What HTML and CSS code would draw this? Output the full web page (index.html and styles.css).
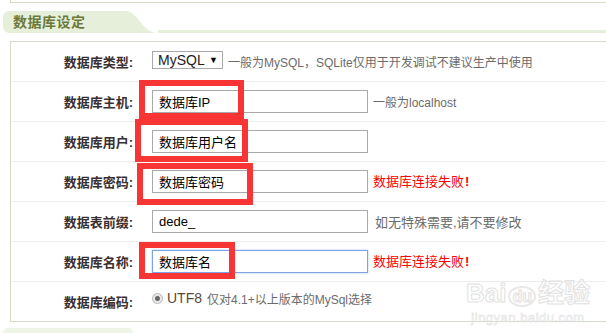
FILE: index.html
```html
<!DOCTYPE html>
<html lang="zh-CN">
<head>
    <meta charset="UTF-8">
    <title>数据库设定</title>
    <link rel="stylesheet" href="styles.css">
</head>
<body>
    <div class="prev-box"></div>

    <div class="section-head">
        <div class="tab">数据库设定</div>
        <div class="tab-line"></div>
    </div>

    <div class="box">
        <div class="row">
            <div class="label">数据库类型:</div>
            <div class="value">
                <span class="select">MySQL <span class="arrow">▼</span></span>
                <span class="hint">一般为MySQL，SQLite仅用于开发调试不建议生产中使用</span>
            </div>
        </div>
        <div class="row">
            <div class="label">数据库主机:</div>
            <div class="value">
                <div class="field">
                    <input type="text" value="数据库IP">
                    <span class="mark mark-host"></span>
                </div>
                <span class="hint">一般为localhost</span>
            </div>
        </div>
        <div class="row">
            <div class="label">数据库用户:</div>
            <div class="value">
                <div class="field">
                    <input type="text" value="数据库用户名">
                    <span class="mark mark-user"></span>
                </div>
            </div>
        </div>
        <div class="row">
            <div class="label">数据库密码:</div>
            <div class="value">
                <div class="field">
                    <input type="text" value="数据库密码">
                    <span class="mark mark-pwd"></span>
                </div>
                <span class="error">数据库连接失败<b>!</b></span>
            </div>
        </div>
        <div class="row">
            <div class="label">数据表前缀:</div>
            <div class="value">
                <div class="field">
                    <input type="text" value="dede_">
                </div>
                <span class="hint hint-wide">如无特殊需要,请不要修改</span>
            </div>
        </div>
        <div class="row">
            <div class="label">数据库名称:</div>
            <div class="value">
                <div class="field">
                    <input type="text" class="focused" value="数据库名">
                    <span class="mark mark-name"></span>
                </div>
                <span class="error">数据库连接失败<b>!</b></span>
            </div>
        </div>
        <div class="row row-last">
            <div class="label">数据库编码:</div>
            <div class="value value-top">
                <span class="radio"></span>
                <span class="utf">UTF8</span>
                <span class="hint">仅对4.1+以上版本的MySql选择</span>
            </div>
        </div>
    </div>

    <div class="next-head">
        <div class="tab-empty"></div>
    </div>

    <div class="watermark">
        <div class="wm-logo">Bai<span class="wm-du">du</span>经验</div>
        <div class="wm-url">jingyan.baidu.com</div>
    </div>
</body>
</html>
```

FILE: styles.css
```css
body {
    margin: 0;
    padding: 0;
    background: #fff;
    font-family: "Liberation Sans", "Noto Sans CJK SC", sans-serif;
    font-size: 12px;
    color: #333;
    overflow: hidden;
    width: 606px;
    height: 333px;
    position: relative;
}
.prev-box {
    margin-left: 10px;
    height: 2px;
    border-left: 1px solid #d3dcc8;
    border-bottom: 1px solid #d3dcc8;
}
.section-head {
    display: flex;
    align-items: flex-end;
    margin-top: 8px;
    margin-left: 3px;
    height: 22px;
}
.tab {
    width: 155px;
    height: 22px;
    flex-shrink: 0;
    background: #e6efd9;
    clip-path: path('M7 0 H122 C136 0 138 22 155 22 H7 Q0 22 0 15 V7 Q0 0 7 0 Z');
    color: #6b7a3c;
    font-weight: bold;
    font-size: 14px;
    letter-spacing: 0.5px;
    line-height: 22px;
    padding-left: 10px;
    box-sizing: border-box;
}
.tab-line {
    flex: 1;
    height: 3px;
    background: #e6efd9;
}
.box {
    margin-top: 8px;
    margin-left: 10px;
    border: 1px solid #d3dcc8;
    border-right: none;
}
.row {
    display: flex;
    height: 39px;
    border-bottom: 1px solid #ededed;
}
.row-last {
    border-bottom: none;
}
.label {
    width: 122px;
    flex-shrink: 0;
    text-align: right;
    font-weight: bold;
    font-size: 13px;
    color: #3a3030;
    line-height: 39px;
    padding-top: 1px;
}
.value {
    display: flex;
    align-items: center;
    padding-left: 19px;
    white-space: nowrap;
}
.value-top {
    align-items: flex-start;
    padding-top: 8px;
}
.select {
    display: inline-flex;
    align-items: center;
    justify-content: space-between;
    width: 71px;
    height: 18px;
    box-sizing: border-box;
    border: 1px solid #a9a9a9;
    padding: 0 4px 0 5px;
    font-size: 14px;
    color: #222;
    margin-top: -3px;
}
.arrow {
    font-size: 9px;
    color: #000;
}
.hint {
    color: #6b6b6b;
    font-size: 12px;
    margin-left: 5px;
}
.hint-wide {
    font-size: 13px;
    margin-left: 7px;
}
.field {
    position: relative;
    width: 216px;
    height: 23px;
}
input {
    width: 216px;
    height: 23px;
    box-sizing: border-box;
    border: 1px solid #a9a9a9;
    padding: 0 6px;
    margin: 0;
    font-family: "Liberation Sans", "Noto Sans CJK SC", sans-serif;
    font-size: 13px;
    color: #000;
    outline: none;
}
input.focused {
    border: 1px solid #7da2e6;
    box-shadow: 0 0 2px #a9c3f0;
}
.error {
    color: #f00;
    font-size: 13px;
    margin-left: 5px;
    margin-top: -2px;
}
.error b {
    margin-left: 1px;
}
.mark {
    position: absolute;
    border: 6px solid #f83535;
    box-sizing: border-box;
}
.mark-host {
    left: -13px;
    top: -10px;
    width: 105px;
    height: 39px;
}
.mark-user {
    left: -17px;
    top: -11px;
    width: 113px;
    height: 43px;
}
.mark-pwd {
    left: -15px;
    top: -7px;
    width: 116px;
    height: 42px;
}
.mark-name {
    left: -13px;
    top: -8px;
    width: 96px;
    height: 37px;
}
.radio {
    width: 9px;
    height: 9px;
    border-radius: 50%;
    border: 1px solid #b5b5b5;
    background: radial-gradient(circle, #666 0, #666 2px, #e8e8e8 3px);
    margin-top: 3px;
}
.utf {
    font-size: 14px;
    color: #5a4a3a;
    margin-left: 4px;
}
.next-head {
    margin-top: 6px;
    margin-left: 3px;
    height: 5px;
}
.tab-empty {
    width: 130px;
    height: 5px;
    border-radius: 6px 6px 0 0;
    background: #eef5e6;
}
.watermark {
    position: absolute;
    left: 466px;
    top: 280px;
    color: transparent;
    -webkit-text-stroke: 1px #e2e2e2;
    text-align: center;
}
.wm-logo {
    font-size: 26px;
    font-weight: bold;
    line-height: 26px;
}
.wm-du {
    font-size: 16px;
    border: 2px solid #e8e8e8;
    border-radius: 50%;
    padding: 0 2px;
    margin: 0 2px;
}
.wm-url {
    font-size: 13px;
    -webkit-text-stroke: 0.6px #e2e2e2;
    letter-spacing: 0.5px;
}
```
